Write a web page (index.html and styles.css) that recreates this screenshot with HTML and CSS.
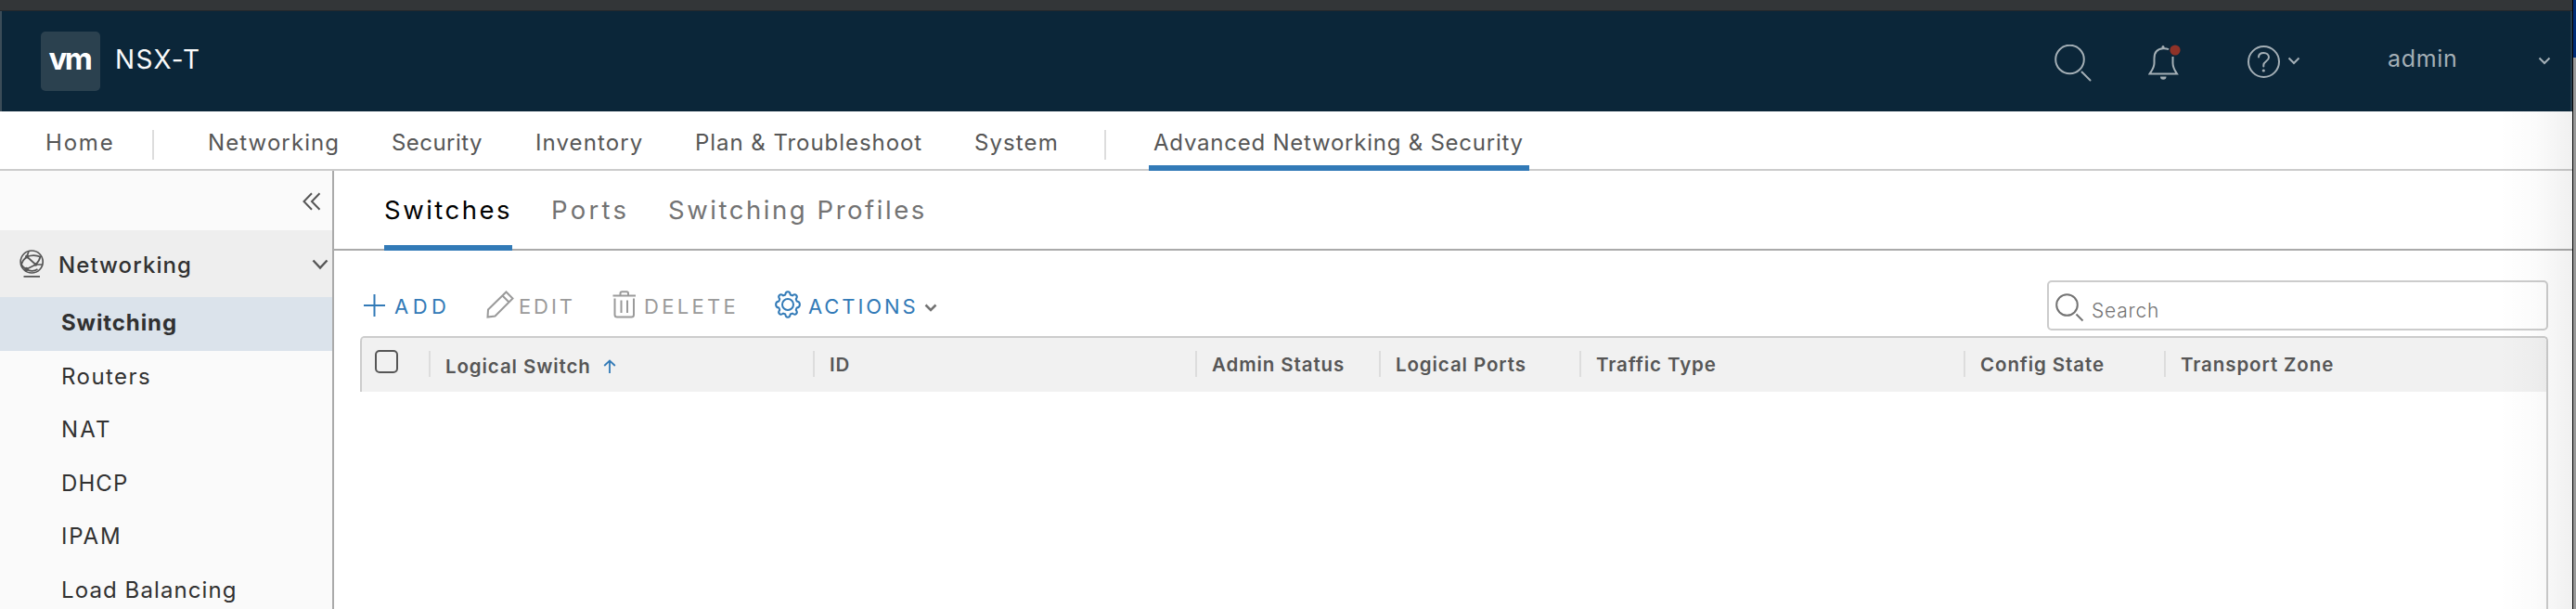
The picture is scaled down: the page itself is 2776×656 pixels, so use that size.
FILE: index.html
```html
<!DOCTYPE html>
<html lang="en">
<head>
<meta charset="utf-8">
<title>NSX-T</title>
<link rel="stylesheet" href="styles.css">
</head>
<body>
<div class="window">
  <div class="app">
    <div class="titlebar"></div>
    <header class="header">
      <div class="logo">vm</div>
      <div class="product">NSX-T</div>
      <div class="tools">
        <svg class="ic-search" width="40" height="40" viewBox="0 0 40 40"><circle cx="16.5" cy="16" r="15.3"/><path d="M29.5 29.5l9 9" stroke-linecap="round"/></svg>
        <svg class="ic-bell" width="36" height="40" viewBox="0 0 36 40"><path d="M22 5.2C20 4.3 18 4 16 4.200 9.500 4.500 6.500 9 6.500 15v5c0 5-2 7-5 11.500h29.500C28 27 26.500 25 26.500 20v-7"/><path class="solid" d="M14.500 5V2.500a1.500 1.500 0 0 1 3 0V5zM13 34.500h6.500a3.200 3.200 0 0 1-6.500 0z"/><circle class="dot" cx="29" cy="6" r="5.600"/></svg>
        <svg class="ic-help" width="35" height="37" viewBox="0 0 35 37"><circle cx="17.500" cy="18.500" r="16.500"/><path d="M12 13.500c0-3 2.500-4.500 5.500-4.500s5.500 1.800 5.500 4.800c0 4.200-5.700 4.200-5.700 8.200v1.500" stroke-linecap="round"/><circle class="solid" cx="17.300" cy="28" r="1.600"/></svg>
        <svg class="ic-caret" width="14" height="9" viewBox="0 0 14 9"><path d="M1.500 1.500L7 7l5.500-5.500"/></svg>
        <div class="user">admin</div>
        <svg class="ic-caret" width="14" height="9" viewBox="0 0 14 9"><path d="M1.500 1.500L7 7l5.500-5.500"/></svg>
      </div>
    </header>
    <nav class="nav">
      <a class="home">Home</a><i class="sep sep-a"></i>
      <a class="networking">Networking</a>
      <a class="security">Security</a>
      <a class="inventory">Inventory</a>
      <a class="plan">Plan &amp; Troubleshoot</a>
      <a class="system">System</a><i class="sep sep-b"></i>
      <a class="advanced">Advanced Networking &amp; Security</a>
    </nav>
    <div class="body">
      <aside class="sidebar">
        <div class="collapse"><svg width="20" height="20" viewBox="0 0 20 20"><path d="M10 1.200L1.500 10l8.500 8.800M18.500 1.200L10 10l8.500 8.800"/></svg></div>
        <div class="group">
          <svg width="27" height="30" viewBox="0 0 27 30"><circle cx="13.200" cy="13" r="12"/><path d="M8 7.500c5-2 10-2 15 .2M8 7.500C4.500 10 3 13 2 16M8 7.500l9.500 8.500M8 7.500l2-6M17.500 16c3-3 4.500-6 5-9M17.500 16l7 0M17.500 16L7.500 21M7.500 21c-2-1-4-2-5.500-5M7.500 21c4 2.500 8 2.500 12 0M4.500 28.800h17.500"/><circle class="fill" cx="8" cy="7.500" r="2"/><circle class="fill" cx="17.500" cy="16" r="1.800"/><circle class="fill" cx="7.300" cy="21" r="2.200"/></svg>
          <span>Networking</span>
          <svg class="chev" width="18" height="12" viewBox="0 0 18 12"><path d="M1.500 1.500L9 9.500l7.500-8"/></svg>
        </div>
        <a class="item active">Switching</a>
        <a class="item routers">Routers</a>
        <a class="item nat">NAT</a>
        <a class="item">DHCP</a>
        <a class="item ipam">IPAM</a>
        <a class="item">Load Balancing</a>
      </aside>
      <main class="main">
        <div class="tabs">
          <a class="tab current">Switches</a>
          <a class="tab ports">Ports</a>
          <a class="tab profiles">Switching Profiles</a>
        </div>
        <div class="bar">
          <button class="btn add"><svg width="25" height="26" viewBox="0 0 25 26"><path d="M1 13h23M12.500 1v24"/></svg><span>ADD</span></button>
          <button class="btn edit off"><svg width="30" height="30" viewBox="0 0 30 30"><path d="M2 20.500L21.500 1.500l7 7L9.500 27.500 1.500 28.500zM17.500 5.500l7 7"/></svg><span>EDIT</span></button>
          <button class="btn delete off"><svg width="26" height="30" viewBox="0 0 26 30"><path d="M.5 5.500h24.500M8.500 5V3c0-1 .7-1.800 1.800-1.800h4.900c1.100 0 1.800.8 1.800 1.800v2M2.500 8.500V26c0 1.600.9 2.500 2.500 2.500h15.500c1.600 0 2.500-.9 2.500-2.500V8.500M9.500 10.500V24M16 10.500V24"/></svg><span>DELETE</span></button>
          <button class="btn actions"><svg width="30" height="30" viewBox="0 0 30 30"><circle cx="15" cy="15" r="6"/><path d="M12.300 4.500C12.500 2.200 13 1.200 15 1.200s2.500 1 2.700 3.300l2.200.9c1.800-1.500 2.800-1.800 4.200-.4s1.100 2.400-.4 4.200l.9 2.200c2.300.2 3.300 1.600 3.300 3.600s-1 3.400-3.300 3.600l-.9 2.200c1.500 1.800 1.800 2.800.4 4.200s-2.400 1.100-4.200-.4l-2.200.9c-.2 2.300-.7 3.300-2.700 3.300s-2.500-1-2.700-3.300l-2.200-.9c-1.800 1.500-2.800 1.800-4.200.4s-1.100-2.400.4-4.200l-.9-2.200c-2.300-.2-3.300-1.600-3.300-3.600s1-3.400 3.300-3.600l.9-2.200C4.800 7.400 4.500 6.400 5.900 5s2.400-1.100 4.200.4z" stroke-linejoin="round"/></svg><span>ACTIONS</span><svg class="down" width="14" height="9" viewBox="0 0 14 9"><path d="M1.500 1.500L7 7l5.500-5.500"/></svg></button>
          <div class="search"><svg width="31" height="31" viewBox="0 0 31 31"><circle cx="12.500" cy="12.500" r="11.300"/><path d="M22.500 22.500l7 7"/></svg><span>Search</span></div>
        </div>
        <div class="table">
          <div class="thead">
            <div class="check"><i></i></div>
            <div class="th sorted">Logical Switch<svg width="14" height="15" viewBox="0 0 14 15"><path d="M7 15V1.500M1.200 7L7 1.500 12.800 7"/></svg></div>
            <div class="th">ID</div>
            <div class="th">Admin Status</div>
            <div class="th">Logical Ports</div>
            <div class="th">Traffic Type</div>
            <div class="th">Config State</div>
            <div class="th">Transport Zone</div>
          </div>
        </div>
      </main>
    </div>
    <div class="shade"></div>
  </div>
  <div class="edge"><div class="edge-top"></div></div>
</div>
</body>
</html>
```
FILE: styles.css
```css
* { box-sizing: border-box; }
body { margin: 0; font-family: Inter, "Open Sans", sans-serif; background: #fff; }
svg { display: block; flex: none; fill: none; stroke: currentColor; stroke-width: 2; }
.window { display: flex; width: 2776px; height: 656px; overflow: hidden; }
.app { position: relative; width: 2772px; height: 656px; display: flex; flex-direction: column; }
.edge { width: 4px; background: #999; border-left: 1px solid #000; }
.edge-top { height: 62px; background: #002d78; }
.shade { position: absolute; top: 120px; right: 0; bottom: 0; width: 80px; background: linear-gradient(to right, rgba(0,0,0,0), rgba(0,0,0,.015) 50%, rgba(0,0,0,.06)); }

.titlebar { height: 12px; flex: none; background: #333638; border-bottom: 1px solid #23282c; }
.header { height: 108px; flex: none; display: flex; background: #0b2639; border-left: 2px solid #3b4c58; border-right: 2px solid #243c4c; color: #fafafa; }
.logo { width: 64px; height: 64px; margin: 22px 0 0 42px; border-radius: 5px; background: #2b414f; color: #fff; font-size: 33px; font-weight: 700; letter-spacing: -2.5px; line-height: 59px; text-align: center; text-indent: -2px; }
.product { margin-left: 16px; font-size: 28px; letter-spacing: 1.31px; line-height: 104px; }
.tools { display: flex; margin-left: auto; color: #a4afb6; width: 556px; }
.ic-search { margin-top: 36px; }
.ic-bell { margin: 36px 0 0 61px; }
.ic-help { margin: 36px 0 0 71px; }
.tools .solid { fill: currentColor; stroke: none; }
.tools .dot { fill: #8f3228; stroke: none; }
.ic-caret { margin: 49px 0 0 8px; }
.user { margin-left: 94px; width: 154px; font-size: 25px; letter-spacing: .68px; line-height: 102px; }

.nav { height: 64px; flex: none; display: flex; padding-left: 49px; border-bottom: 2px solid #ccc; color: #565656; font-size: 24px; line-height: 67px; white-space: nowrap; }
.sep { width: 2px; height: 32px; margin-top: 20px; background: #ddd; }
.home { width: 115px; letter-spacing: 1.8px; }
.sep-a { margin-right: 58px; }
.networking { width: 198px; letter-spacing: 1.1px; }
.security { width: 155px; letter-spacing: .45px; }
.inventory { width: 172px; letter-spacing: 1.1px; }
.plan { width: 301px; letter-spacing: .95px; }
.system { width: 140px; letter-spacing: 1.1px; }
.sep-b { margin-right: 46px; }
.advanced { width: 410px; height: 64px; padding-left: 5px; letter-spacing: .76px; border-bottom: 6px solid #327ab7; }

.body { flex: 1; display: flex; min-height: 0; }
.sidebar { width: 360px; flex: none; border-right: 2px solid #aaa; background: #fafafa; color: #313131; font-size: 24px; overflow: hidden; }
.collapse { height: 64px; padding: 23px 0 0 326px; color: #565656; }
.group { height: 72px; display: flex; padding-left: 21px; background: #eee; color: #565656; font-weight: 500; letter-spacing: 1.07px; line-height: 75px; }
.group svg { margin-top: 21px; stroke-width: 1.7; }
.group .fill { fill: currentColor; stroke: none; }
.group span { margin-left: 15px; width: 273px; color: #313131; }
.group .chev { margin-top: 31px; margin-left: 0; stroke-width: 2.4; }
.item { display: block; height: 57.6px; padding-left: 66px; line-height: 56px; letter-spacing: 1.1px; }
.item.active { background: #dbe3eb; font-weight: 700; letter-spacing: .91px; }
.item.routers { letter-spacing: 1.45px; }
.item.nat { letter-spacing: 2.2px; }
.item.ipam { letter-spacing: 1.81px; }

.main { flex: 1; display: flex; flex-direction: column; }
.tabs { height: 86px; flex: none; display: flex; padding-left: 54px; border-bottom: 2px solid #aaa; color: #737373; font-size: 27.500px; line-height: 85px; white-space: nowrap; }
.tab { height: 86px; letter-spacing: 2.55px; }
.current { width: 138px; color: #000; letter-spacing: 2.5px; border-bottom: 6px solid #327ab7; }
.ports { width: 126px; margin-left: 42px; letter-spacing: 3.3px; }

.bar { height: 92px; flex: none; display: flex; padding-left: 31px; }
.btn { display: flex; height: 86px; margin: 0; padding: 0; border: 0; background: none; color: #327ab7; font: 400 22px/121px Inter, sans-serif; letter-spacing: 2.9px; white-space: nowrap; }
.btn svg { margin-top: 43px; }
.btn.off { color: #9a9a9a; }
.add { width: 133px; letter-spacing: 4.5px; }
.add svg { margin-top: 46px; }
.add span { margin-left: 9px; }
.edit { width: 136px; }
.edit span { margin-left: 5px; }
.delete { width: 174px; letter-spacing: 3.3px; }
.delete span { margin-left: 8px; }
.actions span { margin-left: 7px; width: 125px; text-align: left; }
.actions .down { margin-top: 57px; color: #737373; stroke-width: 2.5; }
.search { display: flex; width: 540px; height: 54px; margin: 32px 26px 0 auto; padding-left: 7px; border: 2px solid #ccc; border-radius: 5px; color: #737373; font-size: 21px; font-weight: 300; line-height: 61px; letter-spacing: .78px; }
.search svg { margin-top: 12px; }
.search span { margin-left: 8px; }

.table { flex: 1; margin: 0 26px 0 28px; border-top: 2px solid #ccc; border-right: 2px solid #ccc; border-radius: 5px 5px 0 0; }
.thead { height: 58px; display: grid; grid-template-columns: 72px 414px 412px 198px 216px 414px 216px 1fr; background: #f1f1f1; border-left: 2px solid #ccc; border-radius: 4px 4px 0 0; color: #565656; font-size: 20.500px; font-weight: 600; letter-spacing: .9px; line-height: 58px; }
.check i { display: block; width: 25px; height: 25px; margin: 13px 0 0 14px; border: 2.5px solid #565656; border-radius: 5px; }
.th { display: flex; align-items: flex-start; }
.th::before { content: ""; width: 2px; height: 28px; margin: 14px 16px 0 0; background: #ddd; }
.sorted { line-height: 61px; }
.sorted svg { margin: 23px 0 0 13px; color: #327ab7; stroke-width: 1.8; }
```
